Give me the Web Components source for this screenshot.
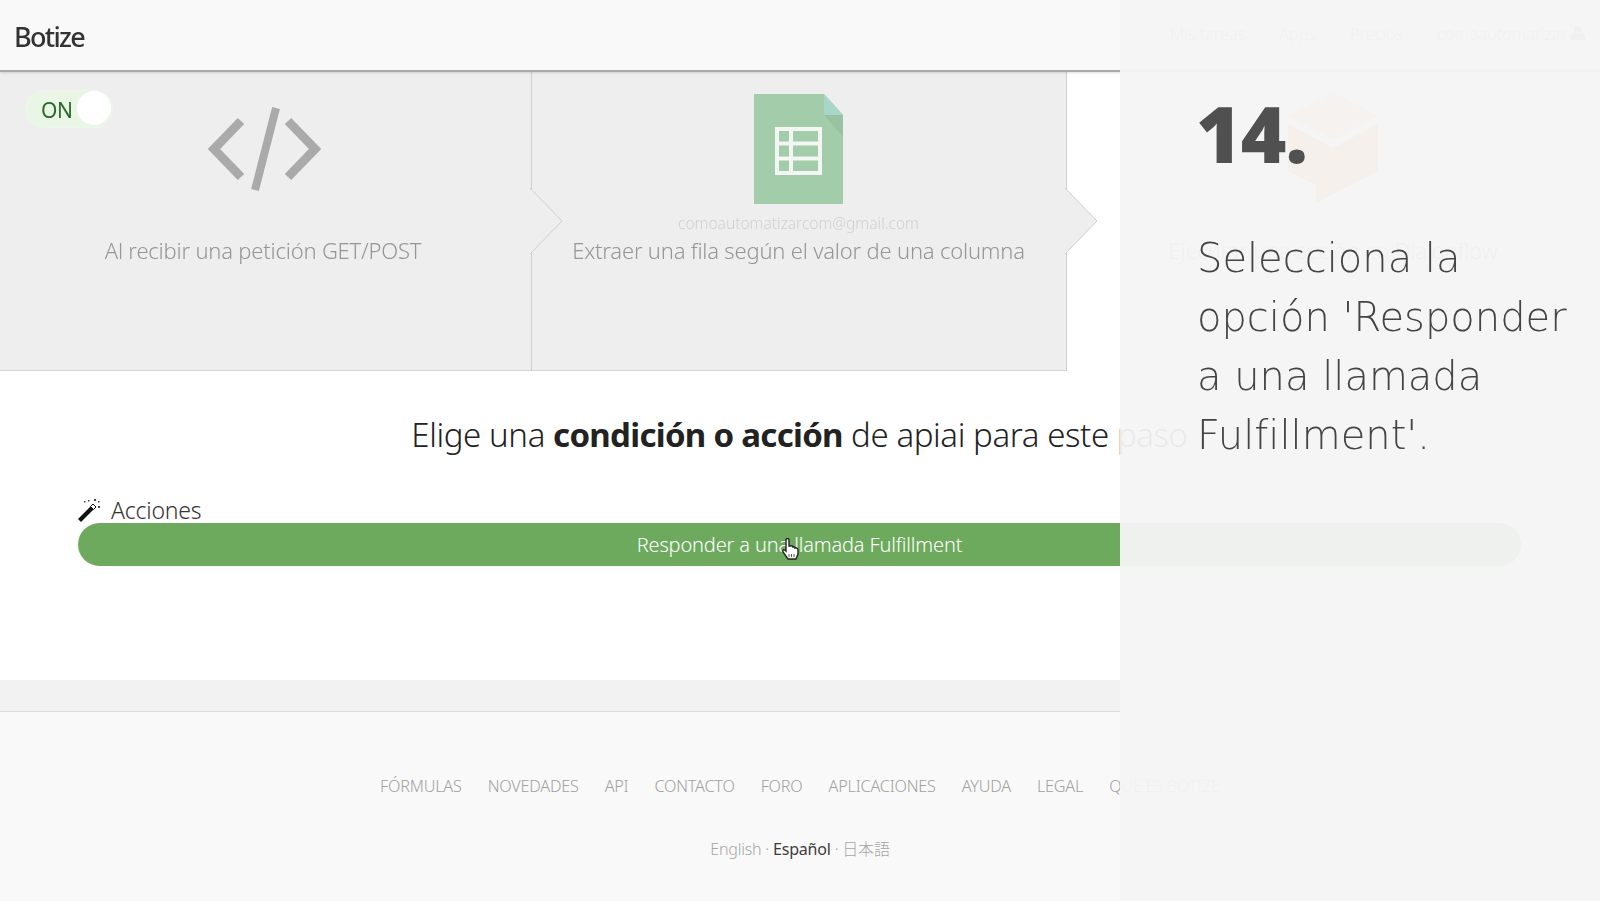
<!DOCTYPE html>
<html lang="es"><head><meta charset="utf-8"><title>Botize</title>
<style>
html,body{margin:0;padding:0;height:901px;overflow:hidden;background:#fff}
body{font-family:"Noto Sans","Noto Sans CJK JP",sans-serif;font-weight:300;color:#333}
#page{position:relative;width:1600px;height:901px;overflow:hidden;display:flex;flex-direction:column;filter:blur(.4px)}
action-chooser b{font-weight:700;letter-spacing:-.7px}
site-footer b{font-weight:400;color:#3c3c3c}
</style></head><body>
<div id="page">
  <app-header>
    <span slot="logo">Botize</span>
    <a>Mis tareas</a><a>Apps</a><a>Precios</a><a>comoautomatizar <svg width="14" height="15" viewBox="0 0 14 15"><circle cx="7" cy="4" r="3.6" fill="#999"/><path d="M0 15V11C0 9 2 8 4 7.5 5.5 9 8.500 9 10 7.500 12 8 14 9 14 11V15Z" fill="#999"/></svg></a>
  </app-header>
  <step-row>
    <step-card done arrow style="--w:532px;--pr:5px" label="Al recibir una petición GET/POST">
      <toggle-switch></toggle-switch>
      <svg slot="icon" width="113" height="84" viewBox="0 0 113 84" style="margin:35px 0 0 3px"><g fill="none" stroke="#aaa" stroke-width="9"><path d="M33 14 6 42 33 70"/><path d="M80 14 107 42 80 70"/><path d="M68 1 47 83" stroke-width="8"/></g></svg>
    </step-card>
    <step-card done arrow style="--w:535px;--pr:1px" account="comoautomatizarcom@gmail.com" label="Extraer una fila según el valor de una columna">
      <svg slot="icon" width="89" height="110" viewBox="0 0 89 110" style="margin:22px 0 0"><path d="M0 0H70L89 21V110H0Z" fill="#a3cdaa"/><path d="M70 0 89 21H70Z" fill="#a8d6c9"/><path d="M70 21H89V43Z" fill="#98c2a0"/><g fill="none" stroke="#f3f6f2" stroke-width="4"><rect x="23" y="35" width="43" height="44"/><path d="M37 35V79M23 49.500H66M23 64.500H66"/></g></svg>
    </step-card>
    <step-card style="--w:533px;--pr:1px" label="Ejecutar una acción en Dialogflow">
      <svg slot="icon" width="92" height="112" viewBox="0 0 92 112" style="margin:20px 0 0"><path d="M46 0 91 24 46 47 1 24Z" fill="#fbc08c"/><path d="M1 32 46 56 91 32V79L29 111V93L1 79Z" fill="#f9a050"/></svg>
    </step-card>
  </step-row>
  <action-chooser>
    <span slot="title">Elige una <b>condición o acción</b> de apiai para este paso</span>
    <svg slot="icon" width="24" height="24" viewBox="0 0 24 24"><path d="M2 21 17 6 20 9 5 24Z" fill="#111"/><path d="M14.500 8.500 17 6 20 9 17.500 11.500Z" fill="#fff" stroke="#111" stroke-width="1"/><path d="M18 1h2v2h-2zM22 8h2v2h-2zM12 2h1.500v1.500H12zM8 3h1.500v1.500H8zM22 3h1.500v1.500H22z" fill="#444"/></svg>
    <span slot="label">Acciones</span>
    <span slot="action">Responder a una llamada Fulfillment</span>
  </action-chooser>
  <site-footer>
    <a>FÓRMULAS</a><a>NOVEDADES</a><a>API</a><a>CONTACTO</a><a>FORO</a><a>APLICACIONES</a><a>AYUDA</a><a>LEGAL</a><a>QUE ES BOTIZE</a>
    <span slot="lang">English · <b>Español</b> · 日本語</span>
  </site-footer>
  <hand-cursor></hand-cursor>
  <tutorial-panel number="14.">
    <span>Selecciona la</span><span>opción 'Responder</span><span>a una llamada</span><span>Fulfillment'.</span>
  </tutorial-panel>
</div>
<script>
function def(name, html, init){
  customElements.define(name, class extends HTMLElement{
    constructor(){super();this.attachShadow({mode:'open'}).innerHTML=html;}
    connectedCallback(){if(init)init(this,this.shadowRoot);}
  });
}
def('app-header',`<style>
:host{display:flex;flex:none;box-sizing:border-box;align-items:center;justify-content:space-between;padding:0 15px 0 14px;background:#f9f9f9;border-bottom:2px solid #a9a9a9;height:72px;position:relative;z-index:1;box-shadow:0 1px 2px rgba(0,0,0,.12)}
.logo{font-size:27px;font-weight:500;color:#333;letter-spacing:-1.700px;padding-top:3px}
nav{display:flex;gap:34px;font-size:16.200px;color:#999;margin-top:-2px}
::slotted(a){white-space:nowrap}
</style><div class="logo"><slot name="logo"></slot></div><nav><slot></slot></nav>`);
def('step-row',`<style>:host{display:flex;flex:none;height:299px}</style><slot></slot>`);
def('step-card',`<style>
:host{display:block;position:relative;flex:none;width:var(--w);box-sizing:border-box;height:299px;text-align:center}
:host([done]){background:#eee;border-bottom:1px solid #d5d5d5;border-right:1px solid #cfcfcf}
.wrap{display:flex;flex-direction:column;align-items:center;height:100%;padding-right:var(--pr,0)}
.icon{height:132px;display:block}
.acc{height:22px;line-height:22px;font-size:15.500px;color:#d0d0d0;margin-top:8px}
.label{font-size:22px;color:#969696;line-height:34px;letter-spacing:-.2px;white-space:nowrap;margin-top:-1px}
.arrow{position:absolute;left:100%;top:116px;margin-left:-1px;z-index:2}
</style><div class="wrap"><div class="icon"><slot name="icon"></slot></div><div class="acc"></div><div class="label"></div></div><slot></slot>`,
(el,s)=>{
  s.querySelector('.label').textContent=el.getAttribute('label');
  s.querySelector('.acc').textContent=el.getAttribute('account')||'';
  if(el.hasAttribute('arrow')&&!s.querySelector('.arrow')){
    s.querySelector('.wrap').insertAdjacentHTML('afterend','<svg class="arrow" width="33" height="66" viewBox="0 0 33 66"><path d="M0 0 32 33 0 66Z" fill="#eee"/><path d="M0 0 32 33 0 66" fill="none" stroke="#cfcfcf"/></svg>');
  }
});
def('toggle-switch',`<style>
:host{position:absolute;left:25px;top:18px;width:88px;height:38px;box-sizing:border-box;border-radius:19px;background:#e9f6e5;border:1px solid #edf6ea;display:flex;align-items:center;padding:2px 0 0 15px;font-size:21px;font-weight:400;color:#2a6a2a;letter-spacing:-.5px}
i{position:absolute;right:1px;top:0;width:34px;height:34px;border-radius:50%;background:#fff}
</style>ON<i></i>`);
def('action-chooser',`<style>
:host{display:flex;flex-direction:column;flex:none;height:309px;padding:43px 79px 0 78px;box-sizing:border-box;background:#fff}
h2{margin:0;text-align:center;font-size:33px;font-weight:300;color:#222;line-height:42px;letter-spacing:-.4px}
.lab{display:flex;align-items:center;gap:11px;margin:41px 0 0 -2px;height:26px;font-size:23px;color:#333;letter-spacing:-.2px}
.btn{height:43px;border-radius:22px;background:#6eaa5e;color:#fff;display:flex;align-items:center;justify-content:center;font-size:20px;letter-spacing:-.15px}
</style><h2><slot name="title"></slot></h2><div class="lab"><slot name="icon"></slot><slot name="label"></slot></div><div class="btn"><slot name="action"></slot></div>`);
def('site-footer',`<style>
:host{display:block;flex:1;background:#f2f2f2}
.f{background:#f9f9f9;border-top:1px solid #dcdcdc;margin-top:31px;height:190px;box-sizing:border-box;padding-top:61px;text-align:center}
nav{display:flex;justify-content:center;gap:26px;font-size:16.200px;color:#a0a0a0;line-height:26px;letter-spacing:-.2px}
.l{margin-top:37px;font-size:16px;line-height:26px;color:#a6a6a6;letter-spacing:-.2px}
</style><div class="f"><nav><slot></slot></nav><div class="l"><slot name="lang"></slot></div></div>`);
def('hand-cursor',`<style>:host{position:absolute;left:781px;top:538px;width:18px;height:22px;z-index:3}</style>
<svg width="18" height="22" viewBox="0 0 18 22"><path d="M5 2C5 0 8 0 8 2V8L10 8C11 7.500 12 8 12 9 13 8.500 14 9 14 10 15 9.500 17 10 17 12V16L15 21H7L2 14C1 12 3 11 5 13Z" fill="#fff" stroke="#222" stroke-width="1.400"/><path d="M8 16v3M10.500 16v3M13 16v3" stroke="#555"/></svg>`);
def('tutorial-panel',`<style>
:host{position:absolute;top:0;right:0;bottom:0;width:480px;background:rgba(244,244,244,.95);z-index:5;box-sizing:border-box;padding:81px 0 0 76px;font-family:"DejaVu Sans",sans-serif;color:#555}
.n{font-family:"Open Sans",sans-serif;font-size:78px;font-weight:800;line-height:104px;color:#505050;letter-spacing:-1px}
.t{margin:44px 0 0 1px;font-size:40px;font-weight:200;line-height:59px;color:#444}
::slotted(span){display:block;white-space:nowrap}
</style><div class="n"></div><div class="t"><slot></slot></div>`,(el,s)=>{s.querySelector('.n').textContent=el.getAttribute('number');});
</script>
</body></html>
